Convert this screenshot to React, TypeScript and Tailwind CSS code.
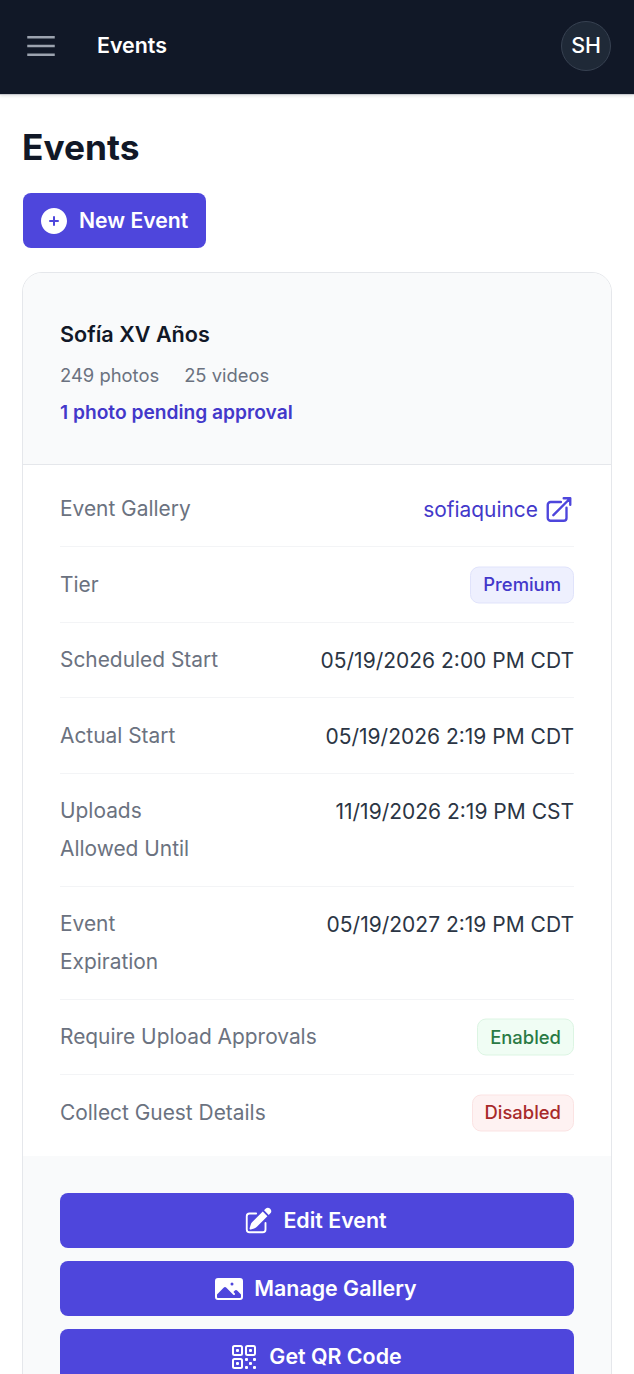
import React from "react";

const label = "text-[20.9px] leading-[37.5px] text-[#6b7280]";
const value = "text-[21px] leading-[37.5px] text-[#2b3544] whitespace-nowrap";

function Row({ left, right, first, last }: { left: React.ReactNode; right: React.ReactNode; first?: boolean; last?: boolean }) {
  return (
    <div
      className={`flex justify-between items-start ${first ? "pt-[25px]" : "pt-[18.5px]"} ${
        last ? "pb-[25px]" : "pb-[18.5px] border-b border-[#f3f4f6]"
      }`}
    >
      <div className={label}>{left}</div>
      <div className="flex items-center h-[37.5px] translate-y-[0.5px]">{right}</div>
    </div>
  );
}

function Badge({ text, cls }: { text: string; cls: string }) {
  return (
    <span className={`inline-flex items-center h-[37px] px-[12px] rounded-[9px] border text-[18.4px] font-medium ${cls}`}>
      {text}
    </span>
  );
}

function ActionButton({ icon, text, gap }: { icon: React.ReactNode; text: string; gap: string }) {
  return (
    <div className={`flex items-center justify-center ${gap} h-[55px] pr-[4px] rounded-[8px] bg-[#4e46dc] text-white text-[21.4px] font-semibold`}>
      {icon}
      <span>{text}</span>
    </div>
  );
}

export default function App() {
  return (
    <div className="w-[634px] h-[1374px] overflow-hidden bg-white font-['Inter',sans-serif]">
      <header className="relative flex items-center justify-between h-[95px] bg-[#111827] border-b border-[#c9cbd0] shadow-[0_1px_3px_rgba(0,0,0,0.12)] pl-[21px] pr-[23px] pb-[3px]">
        <div className="flex items-center gap-[36px]">
          <svg width="40" height="40" viewBox="0 0 24 24" fill="none" stroke="#9ca3af" strokeWidth="1.5">
            <path d="M3.75 6.75h16.5M3.75 12h16.5m-16.5 5.25h16.5" />
          </svg>
          <span className="text-[21.4px] font-semibold text-white">Events</span>
        </div>
        <div className="flex items-center justify-center w-[50px] h-[50px] rounded-full bg-[#1f2937] border border-[#374151] text-[21.4px] font-medium text-white">
          SH
        </div>
      </header>

      <main className="px-[22px] pt-[28px]">
        <h1 className="text-[35.3px] leading-[50px] font-bold text-[#111827]">Events</h1>
        <div className="mt-[20px] ml-px inline-flex items-center gap-[9px] h-[55px] pl-[15px] pr-[18px] rounded-[8px] bg-[#4e46dc] text-white text-[21.2px] font-semibold">
          <svg width="32" height="32" viewBox="0 0 24 24" fill="#fff">
            <path fillRule="evenodd" clipRule="evenodd" d="M12 2.25c-5.385 0-9.75 4.365-9.75 9.75s4.365 9.75 9.750 9.75 9.75-4.365 9.75-9.75S17.385 2.25 12 2.25ZM12.75 9a.75.75 0 0 0-1.5 0v2.25H9a.75.75 0 0 0 0 1.5h2.25V15a.75.75 0 0 0 1.5 0v-2.25H15a.75.75 0 0 0 0-1.5h-2.25V9Z" />
          </svg>
          <span>New Event</span>
        </div>

        <section className="mt-[24px] border border-[#e5e7eb] rounded-[20px] overflow-hidden">
          <div className="bg-[#f9fafb] border-b border-[#e5e7eb] px-[37px] pt-[41px] pb-[33px]">
            <div className="text-[21.6px] leading-[41px] mb-[2px] font-semibold text-[#111827]">Sofía XV Años</div>
            <div className="flex gap-[25px] text-[18.4px] leading-[37px] text-[#6b7280]">
              <span>249 photos</span>
              <span>25 videos</span>
            </div>
            <div className="text-[19.2px] leading-[37px] font-semibold text-[#4338ca]">1 photo pending approval</div>
          </div>

          <div className="px-[37px]">
            <Row
              first
              left="Event Gallery"
              right={
                <span className="flex items-center gap-[6px] text-[20.9px] text-[#4338ca]">
                  sofiaquince
                  <svg width="30" height="30" viewBox="0 0 24 24" fill="none" stroke="#4e46dc" strokeWidth="1.9" strokeLinecap="round" strokeLinejoin="round">
                    <path d="M13.5 6H5.25A2.25 2.25 0 0 0 3 8.25v10.5A2.25 2.25 0 0 0 5.25 21h10.5A2.25 2.25 0 0 0 18 18.75V10.500m-10.500 6L21 3m0 0h-5.25M21 3v5.250" />
                  </svg>
                </span>
              }
            />
            <Row left="Tier" right={<Badge text="Premium" cls="bg-[#eef0fe] border-[#e0e3fb] text-[#4338ca]" />} />
            <Row left="Scheduled Start" right={<span className={value}>05/19/2026 2:00 PM CDT</span>} />
            <Row left="Actual Start" right={<span className={value}>05/19/2026 2:19 PM CDT</span>} />
            <Row left={<>Uploads<br />Allowed Until</>} right={<span className={value}>11/19/2026 2:19 PM CST</span>} />
            <Row left={<>Event<br />Expiration</>} right={<span className={value}>05/19/2027 2:19 PM CDT</span>} />
            <Row left="Require Upload Approvals" right={<Badge text="Enabled" cls="bg-[#f0fdf4] border-[#dcf5e3] text-[#2a7a44]" />} />
            <Row left="Collect Guest Details" right={<Badge text="Disabled" cls="bg-[#fef2f2] border-[#fbe3e3] text-[#a82a2a]" />} last />
          </div>

          <div className="bg-[#f9fafb] px-[37px] pt-[37px] pb-[37px] flex flex-col gap-[13px]">
            <ActionButton
              text="Edit Event"
              gap="gap-[10px]"
              icon={
                <svg width="30" height="30" viewBox="0 0 24 24" fill="#fff">
                  <path d="M21.731 2.269a2.625 2.625 0 0 0-3.712 0l-1.157 1.157 3.712 3.712 1.157-1.157a2.625 2.625 0 0 0 0-3.712ZM19.513 8.199l-3.712-3.712-8.4 8.4a5.25 5.25 0 0 0-1.32 2.214l-.8 2.685a.75.75 0 0 0 .933.933l2.685-.8a5.25 5.25 0 0 0 2.214-1.32l8.4-8.4Z" />
                  <path d="M5.25 5.25a3 3 0 0 0-3 3v10.5a3 3 0 0 0 3 3h10.5a3 3 0 0 0 3-3V13.5a.75.75 0 0 0-1.5 0v5.25a1.5 1.5 0 0 1-1.5 1.5H5.25a1.5 1.5 0 0 1-1.5-1.5V8.25a1.5 1.5 0 0 1 1.5-1.5h5.25a.75.75 0 0 0 0-1.5H5.25Z" />
                </svg>
              }
            />
            <ActionButton
              text="Manage Gallery"
              gap="gap-[9px]"
              icon={
                <svg width="32" height="32" viewBox="0 0 24 24" fill="#fff">
                  <path fillRule="evenodd" clipRule="evenodd" d="M1.5 6a2.25 2.25 0 0 1 2.25-2.25h16.5A2.25 2.25 0 0 1 22.5 6v12a2.25 2.25 0 0 1-2.25 2.25H3.75A2.25 2.25 0 0 1 1.5 18V6ZM3 16.06V18c0 .414.336.75.75.75h16.5A.75.75 0 0 0 21 18v-1.94l-2.69-2.689a1.5 1.5 0 0 0-2.12 0l-.88.879.97.97a.75.75 0 1 1-1.06 1.06l-5.16-5.159a1.5 1.5 0 0 0-2.12 0L3 16.061Zm10.125-7.81a1.125 1.125 0 1 1 2.25 0 1.125 1.125 0 0 1-2.25 0Z" />
                </svg>
              }
            />
            <ActionButton
              text="Get QR Code"
              gap="gap-[9px]"
              icon={
                <svg width="32" height="32" viewBox="0 0 24 24" fill="none" stroke="#fff" strokeWidth="1.5" strokeLinecap="round" strokeLinejoin="round">
                  <path d="M3.75 4.875c0-.621.504-1.125 1.125-1.125h4.5c.621 0 1.125.504 1.125 1.125v4.5c0 .621-.504 1.125-1.125 1.125h-4.5A1.125 1.125 0 0 1 3.75 9.375v-4.5ZM3.75 14.625c0-.621.504-1.125 1.125-1.125h4.5c.621 0 1.125.504 1.125 1.125v4.5c0 .621-.504 1.125-1.125 1.125h-4.5a1.125 1.125 0 0 1-1.125-1.125v-4.5ZM13.5 4.875c0-.621.504-1.125 1.125-1.125h4.5c.621 0 1.125.504 1.125 1.125v4.5c0 .621-.504 1.125-1.125 1.125h-4.5A1.125 1.125 0 0 1 13.5 9.375v-4.5Z" />
                  <path d="M6.75 6.75h.75v.75h-.75v-.75ZM6.75 16.5h.75v.75h-.75v-.75ZM16.5 6.75h.75v.75h-.75v-.75ZM13.5 13.5h.75v.75h-.75v-.75ZM13.5 19.5h.75v.75h-.75v-.75ZM19.5 13.5h.75v.75h-.75v-.75ZM19.5 19.5h.75v.75h-.75v-.75ZM16.5 16.5h.75v.75h-.75v-.75Z" />
                </svg>
              }
            />
          </div>
        </section>
      </main>
    </div>
  );
}
